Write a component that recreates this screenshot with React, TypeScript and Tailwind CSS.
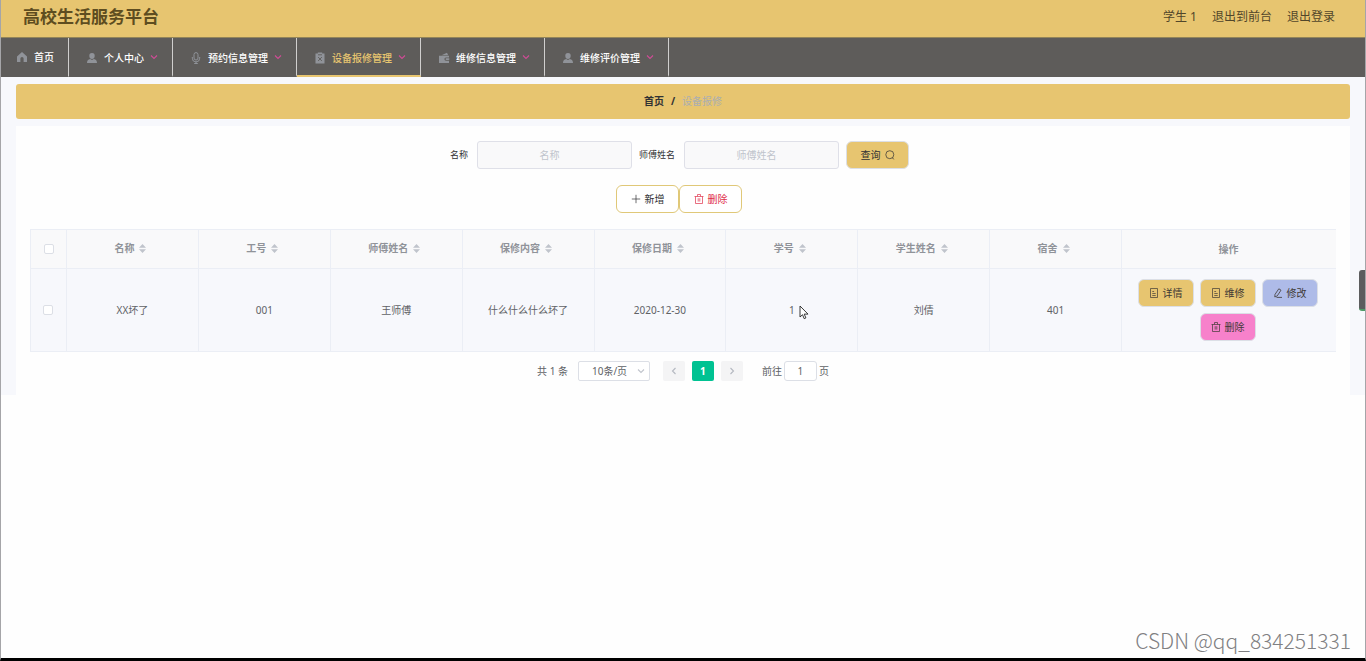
import React from 'react';
import clsx from 'clsx';

type IconProps = { className?: string };

const HomeIcon = ({ className }: IconProps) => (
  <svg viewBox="0 0 12 12" className={className} fill="currentColor">
    <path d="M6 1 11 5.6V11H7.6V7.6a1.6 1.6 0 0 0-3.2 0V11H1V5.6z" />
  </svg>
);

const UserIcon = ({ className }: IconProps) => (
  <svg viewBox="0 0 12 12" className={className} fill="currentColor">
    <path d="M6 1a2.7 2.7 0 0 1 2.7 2.9C8.7 5.7 7.5 7 6 7S3.3 5.7 3.3 3.9A2.7 2.7 0 0 1 6 1z" />
    <path d="M1 11c0-2.200 1-3.600 3.200-3.900.5.5 1.100.8 1.800.8s1.300-.3 1.800-.8C10 7.400 11 8.800 11 11z" />
  </svg>
);

const MicIcon = ({ className }: IconProps) => (
  <svg viewBox="0 0 12 12" className={className} fill="none" stroke="currentColor" strokeWidth="1">
    <rect x="4" y="0.6" width="4" height="7.4" rx="2" />
    <path d="M2.300 5v1.200a3.700 3.700 0 0 0 7.400 0V5M6 9.900v1.600M4.200 11.500h3.600" />
  </svg>
);

const ClipboardIcon = ({ className }: IconProps) => (
  <svg viewBox="0 0 12 12" className={className}>
    <path fill="currentColor" d="M1.500 1.500h2.300V.5h4.400v1h2.300v10h-9z" />
    <path stroke="#5e5c5a" strokeWidth="0.9" fill="none" d="M4 2.800h4M4.100 5l3.800 4M7.900 5 4.100 9" />
  </svg>
);

const WalletIcon = ({ className }: IconProps) => (
  <svg viewBox="0 0 12 12" className={className} fill="currentColor">
    <path d="M3.500 3.200 9 .8l1.200 2.400z" />
    <path d="M1 3.700h10v1.800H8a1.500 1.500 0 0 0 0 3.200h3V11H1z" />
    <rect x="7.5" y="6.3" width="4" height="1.6" rx="0.8" />
  </svg>
);

const ChevronIcon = ({ className }: IconProps) => (
  <svg viewBox="0 0 8 8" className={className} fill="none" stroke="currentColor" strokeWidth="1.1">
    <path d="M1 2.500 4 5.500 7 2.500" />
  </svg>
);

const DocIcon = ({ className }: IconProps) => (
  <svg viewBox="0 0 10 10" className={className} fill="none" stroke="currentColor" strokeWidth="0.7">
    <path d="M1.500.5h7v9h-7zM3.300 3.500h1.800M3.300 5.500h3.400M3.300 7.500h3.400" />
  </svg>
);

const EditIcon = ({ className }: IconProps) => (
  <svg viewBox="0 0 10 10" className={className} fill="none" stroke="currentColor" strokeWidth="0.8">
    <path d="M5.800.8 8 2.200 4.300 7.800 1.800 9 2 6.400zM3.500 9.400H9" />
  </svg>
);

const TrashIcon = ({ className }: IconProps) => (
  <svg viewBox="0 0 10 10" className={className} fill="none" stroke="currentColor" strokeWidth="0.7">
    <path d="M.5 2.500h9M3.500 2.300V.5h3v1.800M1.500 2.500v7h7v-7M4.200 4.200v3.400M5.800 4.200v3.400" />
  </svg>
);

const PlusIcon = ({ className }: IconProps) => (
  <svg viewBox="0 0 10 10" className={className} fill="none" stroke="currentColor" strokeWidth="0.7">
    <path d="M5 .8v8.400M.8 5h8.400" />
  </svg>
);

const SearchIcon = ({ className }: IconProps) => (
  <svg viewBox="0 0 10 10" className={className} fill="none" stroke="currentColor" strokeWidth="0.7">
    <circle cx="4.8" cy="4.7" r="4" />
    <path d="m7.300 7.500 1.500 1.900" />
  </svg>
);

const SortIcon = () => (
  <svg viewBox="0 0 7 9" className="h-[9px] w-[7px] text-[#c0c4cc]" fill="currentColor">
    <path d="M3.500 0 7 3.800H0zM3.500 9 7 5.200H0z" />
  </svg>
);

const menus = [
  { label: '首页', icon: HomeIcon },
  { label: '个人中心', icon: UserIcon, sub: true },
  { label: '预约信息管理', icon: MicIcon, sub: true },
  { label: '设备报修管理', icon: ClipboardIcon, sub: true, active: true },
  { label: '维修信息管理', icon: WalletIcon, sub: true },
  { label: '维修评价管理', icon: UserIcon, sub: true },
];

const columns = ['名称', '工号', '师傅姓名', '保修内容', '保修日期', '学号', '学生姓名', '宿舍'];

const rows = [['XX坏了', '001', '王师傅', '什么什么什么坏了', '2020-12-30', '1', '刘倩', '401']];

const actions = [
  { label: '详情', icon: DocIcon, color: 'bg-[#e7c570]' },
  { label: '维修', icon: DocIcon, color: 'bg-[#e7c570]' },
  { label: '修改', icon: EditIcon, color: 'bg-[#aebbe8]' },
  { label: '删除', icon: TrashIcon, color: 'bg-[#f781cb]' },
];

const Header = () => (
  <header className="flex h-[38px] items-center justify-between border-b border-[#93855a] bg-[#e7c570] pr-[30px] pb-1 pl-[22px]">
    <h1 className="text-[17px] leading-6 font-bold text-[#5e4d20]">高校生活服务平台</h1>
    <div className="flex gap-[15px] text-[12px] leading-5 text-[#51462a]">
      <span>学生 1</span>
      <a href="#front">退出到前台</a>
      <a href="#logout">退出登录</a>
    </div>
  </header>
);

const NavBar = () => (
  <nav className="flex h-[39px] bg-[#5e5c5a] text-[10px] font-medium text-white">
    {menus.map(({ label, icon: Icon, sub, active }) => (
      <a
        key={label}
        href="#menu"
        className={clsx(
          'flex items-center gap-[6px] border-r border-r-[#d0cfce] pr-[14px]',
          sub ? 'border-b-2 pt-[3px] pl-[17px]' : 'border-b pl-[15px]',
          active ? 'border-b-[#e7c570] text-[#e7c570]' : 'border-b-transparent'
        )}
      >
        <Icon className="size-3 text-[#909399]" />
        <span>{label}</span>
        {sub && <ChevronIcon className="mb-[2px] size-2 text-[#d04c96]" />}
      </a>
    ))}
  </nav>
);

const SearchField = ({ id, label }: { id: string; label: string }) => (
  <div className="flex items-center gap-[9px]">
    <label htmlFor={id} className="text-[9px] text-[#303133]">
      {label}
    </label>
    <input
      id={id}
      type="text"
      placeholder={label}
      className="h-7 w-[155px] rounded-[3px] border border-[#dfe0e8] bg-[#f9f9fa] pr-[10px] text-center text-[10px] placeholder:text-[#c0c4cc]"
    />
  </div>
);

const Cursor = () => (
  <svg viewBox="0 0 10 15" className="absolute top-[2px] left-[10px] h-[15px] w-[10px]">
    <path
      d="M1 1v11l2.500-2.300 1.700 4 1.700-.8-1.700-3.800H9z"
      fill="#fff"
      stroke="#222"
      strokeWidth="0.9"
    />
  </svg>
);

const DataTable = () => (
  <table className="w-full table-fixed border-collapse text-center text-[10px] text-[#606266]">
    <colgroup>
      <col className="w-[36px]" />
      {columns.map((c) => (
        <col key={c} />
      ))}
      <col className="w-[214px]" />
    </colgroup>
    <thead className="bg-[#f9f9fa] text-[#909399]">
      <tr className="h-[39px]">
        <th className="border border-[#ebeef5]">
          <input
            type="checkbox"
            aria-label="全选"
            className="mx-auto block size-[10px] appearance-none rounded-[2px] border border-[#dcdfe6] bg-white"
          />
        </th>
        {columns.map((c) => (
          <th key={c} className="border border-[#ebeef5] pr-1 pb-[2px] font-bold">
            <div className="flex items-center justify-center gap-[5px]">
              {c}
              <SortIcon />
            </div>
          </th>
        ))}
        <th className="border border-[#ebeef5] border-r-transparent font-bold">操作</th>
      </tr>
    </thead>
    <tbody className="bg-[#f7f8fc]">
      {rows.map((row, i) => (
        <tr key={i} className="h-[83px]">
          <td className="border border-[#ebeef5] pr-[2px]">
            <input
              type="checkbox"
              aria-label="选择"
              className="mx-auto block size-[10px] appearance-none rounded-[2px] border border-[#dcdfe6] bg-white"
            />
          </td>
          {row.map((cell, j) => (
            <td key={j} className="border border-[#ebeef5]">
              {columns[j] === '学号' ? (
                <span className="relative">
                  {cell}
                  <Cursor />
                </span>
              ) : (
                cell
              )}
            </td>
          ))}
          <td className="border border-[#ebeef5] border-r-transparent pr-3 pl-[10px]">
            <div className="flex flex-wrap justify-center gap-[6px]">
              {actions.map(({ label, icon: Icon, color }) => (
                <button
                  key={label}
                  type="button"
                  className={clsx(
                    'flex h-7 w-14 items-center justify-center gap-1 rounded-[6px] border border-[#dcdfe6] text-[#3f3a35]',
                    color
                  )}
                >
                  <Icon className="size-[10px]" />
                  {label}
                </button>
              ))}
            </div>
          </td>
        </tr>
      ))}
    </tbody>
  </table>
);

const Pagination = () => (
  <div className="flex h-5 items-center justify-center text-[10px] text-[#606266]">
    <span className="mr-[10px]">共 1 条</span>
    <div className="relative mr-[13px]">
      <select
        aria-label="每页条数"
        className="block h-5 w-[72px] appearance-none rounded-[2px] border border-[#dcdfe6] bg-white pl-[13px]"
      >
        <option>10条/页</option>
      </select>
      <ChevronIcon className="pointer-events-none absolute top-[6px] right-[5px] size-2 text-[#c0c4cc]" />
    </div>
    <div className="mr-[19px] flex gap-[7px]">
      <button
        type="button"
        aria-label="上一页"
        className="flex h-5 w-[22px] items-center justify-center rounded-[2px] bg-[#f4f4f5] text-[#b4b8c0]"
      >
        <ChevronIcon className="size-2 rotate-90" />
      </button>
      <button type="button" className="h-5 w-[22px] rounded-[2px] bg-[#00c292] font-bold text-white">
        1
      </button>
      <button
        type="button"
        aria-label="下一页"
        className="flex h-5 w-[22px] items-center justify-center rounded-[2px] bg-[#f4f4f5] text-[#b4b8c0]"
      >
        <ChevronIcon className="size-2 -rotate-90" />
      </button>
    </div>
    <label htmlFor="page">前往</label>
    <input
      id="page"
      type="text"
      defaultValue="1"
      className="mx-[2px] h-5 w-[33px] rounded-[3px] border border-[#dcdfe6] bg-white text-center"
    />
    <span>页</span>
  </div>
);

export default function App() {
  return (
    <div className="relative min-h-screen border-x border-b-[3px] border-x-[#a5a5a8] border-b-black bg-[#fefefe] font-['Noto_Sans','Noto_Sans_CJK_SC',sans-serif]">
      <Header />
      <NavBar />
      <main className="bg-[#f7f8fc] px-[15px] pt-[7px]">
        <div className="mb-[7px] flex h-[35px] items-center justify-center gap-[7px] rounded-[3px] bg-[#e7c570] text-[10px] font-bold text-[#303133]">
          <a href="#home">首页</a>
          <span>/</span>
          <span className="font-normal text-[#aaaeb2]">设备报修</span>
        </div>
        <section className="bg-[#fefefe] px-[14px] pt-[15px] pb-[14px]">
          <form className="mb-4 flex justify-center gap-[7px] pr-[7px]">
            <SearchField id="name" label="名称" />
            <SearchField id="master" label="师傅姓名" />
            <button
              type="button"
              className="flex h-7 w-[63px] items-center justify-center gap-1 rounded-[6px] border border-[#dcdfe6] bg-[#e7c570] text-[10px] text-[#303133]"
            >
              查询
              <SearchIcon className="size-[10px]" />
            </button>
          </form>
          <div className="mb-4 flex justify-center pr-2 text-[10px]">
            <button
              type="button"
              className="flex h-7 w-[63px] items-center justify-center gap-1 rounded-[6px] border border-[#e0c878] bg-white text-[#303133]"
            >
              <PlusIcon className="size-[10px]" />
              新增
            </button>
            <button
              type="button"
              className="flex h-7 w-[63px] items-center justify-center gap-1 rounded-[6px] border border-[#e0c878] bg-white text-[#e0304a]"
            >
              <TrashIcon className="size-[10px]" />
              删除
            </button>
          </div>
          <DataTable />
          <div className="pt-[9px]">
            <Pagination />
          </div>
        </section>
      </main>
      <div className="absolute top-[270px] right-0 h-[41px] w-[6px] rounded-l-[3px] border-b-2 border-[#4e9a66] bg-[#5c5c5e]" />
      <p className="absolute right-[14px] bottom-1 font-['Noto_Sans_CJK_SC',sans-serif] text-[21px] leading-7 font-light text-[#808082]">
        CSDN @qq_834251331
      </p>
    </div>
  );
}
